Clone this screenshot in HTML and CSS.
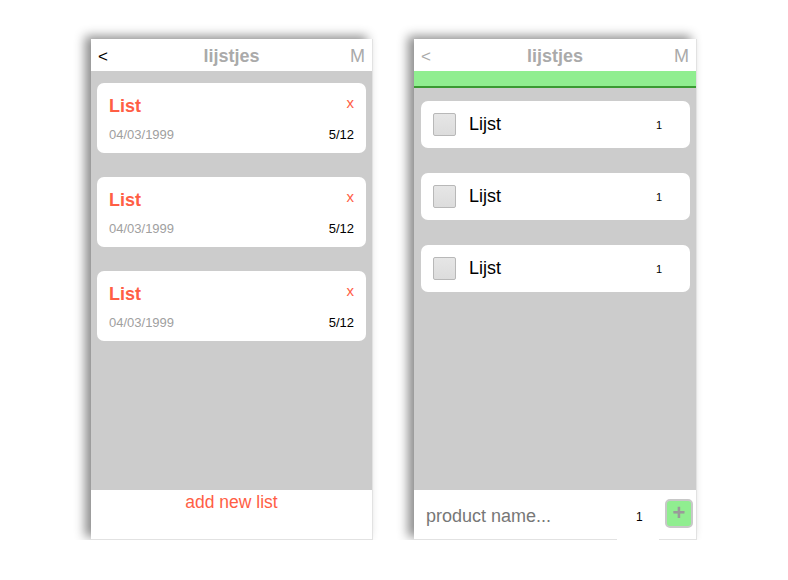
FILE: index.html
```html
<!DOCTYPE html>
<html>
<head>
<meta charset="utf-8">
<link rel="stylesheet" href="styles.css">
</head>
<body>
<div class="stage">
  <div class="phone">
    <div class="header">
      <span class="back dark">&lt;</span>
      <span class="title">lijstjes</span>
      <span class="menu">M</span>
    </div>
    <div class="content lists">
      <div class="list-card">
        <div class="row"><span class="name">List</span><span class="del">x</span></div>
        <div class="row"><span class="date">04/03/1999</span><span class="count">5/12</span></div>
      </div>
      <div class="list-card">
        <div class="row"><span class="name">List</span><span class="del">x</span></div>
        <div class="row"><span class="date">04/03/1999</span><span class="count">5/12</span></div>
      </div>
      <div class="list-card">
        <div class="row"><span class="name">List</span><span class="del">x</span></div>
        <div class="row"><span class="date">04/03/1999</span><span class="count">5/12</span></div>
      </div>
    </div>
    <div class="footer add-footer">add new list</div>
  </div>

  <div class="phone wide">
    <div class="header">
      <span class="back">&lt;</span>
      <span class="title">lijstjes</span>
      <span class="menu">M</span>
    </div>
    <div class="progress"></div>
    <div class="content items">
      <div class="item-card"><span class="check"></span><span class="item-name">Lijst</span><span class="qty">1</span></div>
      <div class="item-card"><span class="check"></span><span class="item-name">Lijst</span><span class="qty">1</span></div>
      <div class="item-card"><span class="check"></span><span class="item-name">Lijst</span><span class="qty">1</span></div>
    </div>
    <div class="footer product-footer">
      <span class="placeholder">product name...</span>
      <span class="num">1</span>
      <span class="plus">+</span>
    </div>
  </div>
</div>
</body>
</html>
```

FILE: styles.css
```css
html, body {
  margin: 0;
  padding: 0;
  background: #ffffff;
  font-family: "Liberation Sans", Arial, sans-serif;
}

.stage {
  display: flex;
  gap: 41px;
  padding: 39px 0 0 91px;
}

.phone {
  width: 281px;
  height: 500px;
  display: flex;
  flex-direction: column;
  background: #ffffff;
  border-right: 1px solid #e2e2e2;
  border-bottom: 1px solid #e2e2e2;
  box-shadow: -6px -3px 10px rgba(0, 0, 0, 0.45);
}

.phone.wide {
  width: 282px;
}

.header {
  height: 32px;
  box-sizing: border-box;
  padding: 3px 7px 0;
  flex: none;
  display: flex;
  align-items: center;
  justify-content: space-between;
  color: #aaaaaa;
}

.back {
  font-size: 17px;
  width: 20px;
}

.back.dark {
  color: #000000;
}

.title {
  font-weight: bold;
  font-size: 18px;
}

.menu {
  font-size: 18px;
  width: 20px;
  text-align: right;
}

.progress {
  flex: none;
  height: 15px;
  background: #90ee90;
  border-bottom: 2px solid #3a9a32;
}

.content {
  flex: 1;
  background: #cccccc;
  display: flex;
  flex-direction: column;
}

.lists {
  padding: 12px 6px 0;
  gap: 24px;
}

.list-card {
  background: #ffffff;
  border-radius: 7px;
  height: 70px;
  box-sizing: border-box;
  padding: 13px 12px 0;
  display: flex;
  flex-direction: column;
  gap: 10px;
}

.row {
  display: flex;
  justify-content: space-between;
  align-items: baseline;
}

.name {
  color: #ff5e45;
  font-weight: bold;
  font-size: 18px;
}

.del {
  color: #ff5e45;
  font-size: 15px;
  align-self: flex-start;
  margin-top: -2px;
}

.date {
  color: #a0a0a0;
  font-size: 13px;
}

.count {
  color: #000000;
  font-size: 13px;
}

.footer {
  flex: none;
  height: 49px;
  background: #ffffff;
}

.add-footer {
  color: #ff5e45;
  font-size: 17.5px;
  text-align: center;
  line-height: 24px;
}

.items {
  padding: 13px 6px 0 7px;
  gap: 25px;
}

.item-card {
  background: #ffffff;
  border-radius: 7px;
  height: 47px;
  display: flex;
  align-items: center;
  padding: 0 12px;
}

.check {
  width: 21px;
  height: 21px;
  border: 1px solid #b8b8b8;
  border-radius: 2px;
  background: linear-gradient(#e6e6e6, #dcdcdc);
  flex: none;
}

.item-name {
  font-size: 18px;
  color: #000000;
  margin-left: 13px;
  flex: 1;
}

.qty {
  font-size: 11px;
  color: #000000;
  margin-right: 16px;
}

.product-footer {
  display: flex;
  align-items: flex-start;
}

.placeholder {
  color: #777777;
  font-size: 18px;
  margin: 16px 0 0 12px;
  flex: 1;
}

.num {
  width: 42px;
  height: 42px;
  box-sizing: border-box;
  margin-top: 10px;
  padding: 10px 0 0 19px;
  font-size: 12px;
  color: #000000;
  background: #ffffff;
  position: relative;
  z-index: 1;
}

.plus {
  width: 24px;
  height: 25px;
  margin: 9px 3px 0 6px;
  background: #90ee90;
  border: 2px solid #c8c8c8;
  border-radius: 5px;
  color: #9a9a9a;
  font-size: 22px;
  font-weight: bold;
  line-height: 24px;
  text-align: center;
}
```
